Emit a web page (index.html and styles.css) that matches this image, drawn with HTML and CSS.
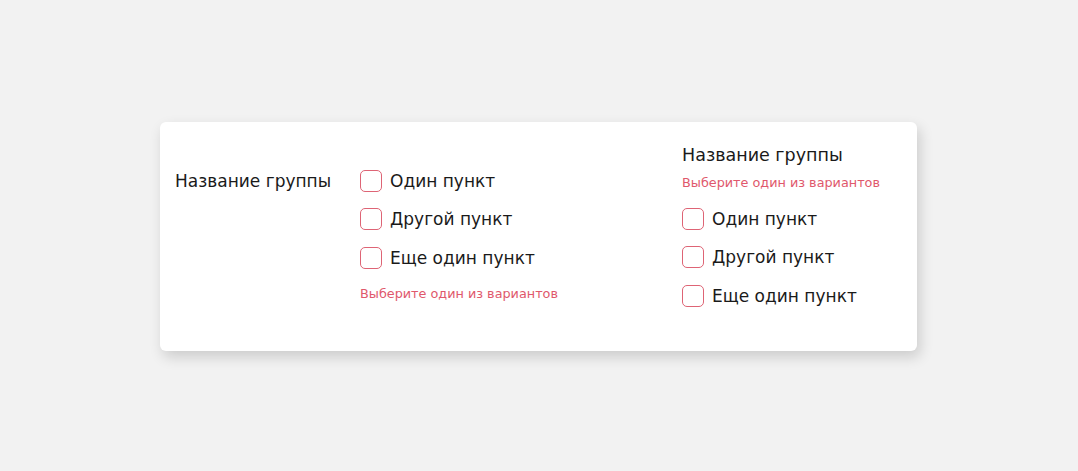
FILE: index.html
```html
<!DOCTYPE html>
<html lang="ru">
<head>
<meta charset="utf-8">
<title>Группы чекбоксов</title>
<link rel="stylesheet" href="styles.css">
</head>
<body>
<div class="card">
  <div class="group group-inline">
    <div class="group-label">Название группы</div>
    <div class="options">
      <label class="option"><span class="box"></span><span class="option-text">Один пункт</span></label>
      <label class="option"><span class="box"></span><span class="option-text">Другой пункт</span></label>
      <label class="option"><span class="box"></span><span class="option-text">Еще один пункт</span></label>
      <div class="error error-bottom">Выберите один из вариантов</div>
    </div>
  </div>
  <div class="group group-stacked">
    <div class="group-title">Название группы</div>
    <div class="error error-top">Выберите один из вариантов</div>
    <div class="options">
      <label class="option"><span class="box"></span><span class="option-text">Один пункт</span></label>
      <label class="option"><span class="box"></span><span class="option-text">Другой пункт</span></label>
      <label class="option"><span class="box"></span><span class="option-text">Еще один пункт</span></label>
    </div>
  </div>
</div>
</body>
</html>
```
FILE: styles.css
```css
html, body {
  margin: 0;
  min-height: 100%;
}
body {
  background: #f2f2f2;
  font-family: "DejaVu Sans", "Noto Sans", sans-serif;
  color: #1a1a1a;
  padding-top: 122px;
  min-height: 471px;
  box-sizing: border-box;
}
.card {
  width: 757px;
  height: 229px;
  margin: 0 0 0 160px;
  box-sizing: border-box;
  background: #fff;
  border-radius: 6px;
  box-shadow: 3px 6px 14px rgba(0, 0, 0, 0.16);
  display: flex;
  padding: 22px 15px 0 15px;
}
.group-inline {
  display: flex;
  width: 507px;
  margin-top: 26px;
  align-items: flex-start;
}
.group-label {
  width: 185px;
  font-size: 17px;
  line-height: 22px;
}
.options {
  display: flex;
  flex-direction: column;
  gap: 16.3px;
}
.option {
  display: flex;
  align-items: center;
  height: 22px;
}
.box {
  width: 22px;
  height: 22px;
  box-sizing: border-box;
  border: 1.5px solid #de6475;
  border-radius: 5px;
  margin-right: 8px;
  flex: none;
}
.option-text {
  font-size: 17px;
  line-height: 22px;
}
.error {
  color: #e0586c;
  font-size: 12.8px;
  line-height: 15px;
}
.error-bottom {
  margin-top: 1px;
}
.group-title {
  font-size: 17.5px;
  line-height: 22px;
}
.error-top {
  margin-top: 8.5px;
  margin-bottom: 18.5px;
}
```
